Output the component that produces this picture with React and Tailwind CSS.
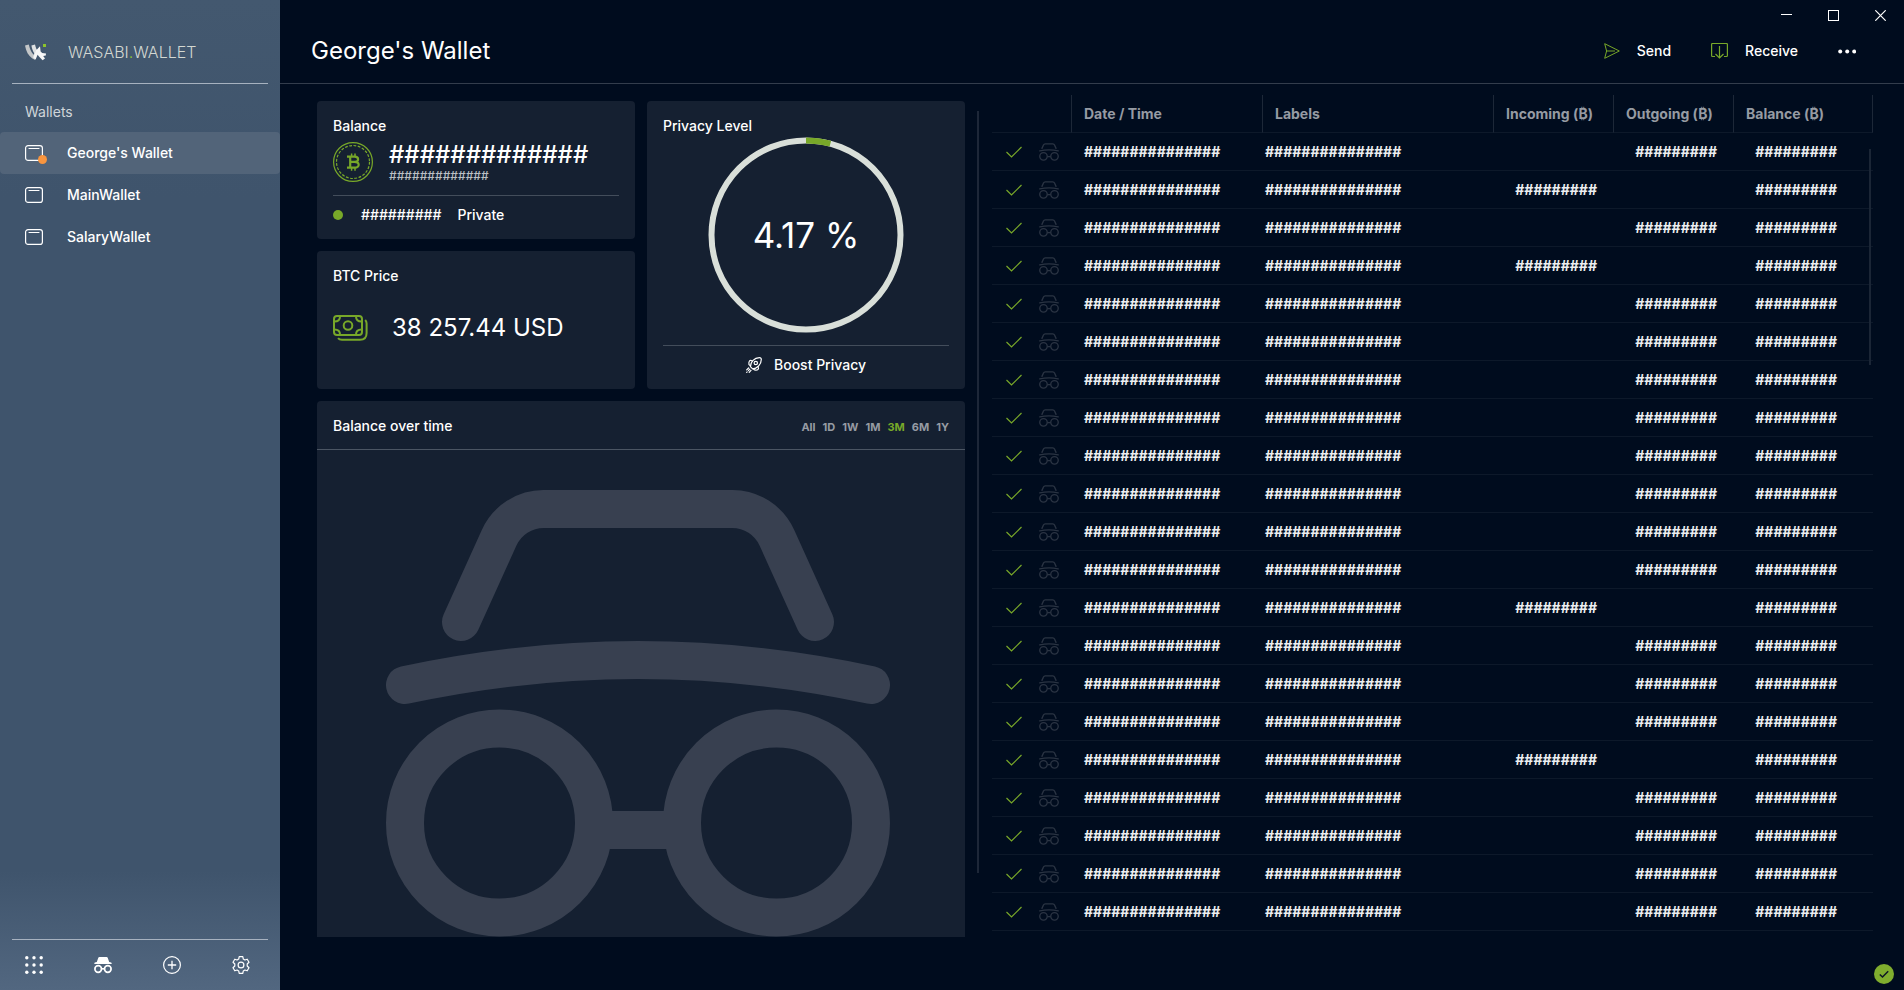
function GlassesHat({ className, strokeWidth = 38 }) {
  return (
    <svg
      viewBox="0 0 504 447"
      className={className}
      fill="none"
      stroke="currentColor"
      strokeWidth={strokeWidth}
      strokeLinecap="round"
      aria-hidden="true"
    >
      <path d="M75 132L113 48A49 49 0 0 1 158 19H346A49 49 0 0 1 391 48L429 132" />
      <path d="M19 195Q252 145 485 195" />
      <circle cx="113.500" cy="333" r="94.500" />
      <circle cx="390.500" cy="333" r="94.500" />
      <path d="M208 340H296" strokeLinecap="butt" />
    </svg>
  );
}

function Logo() {
  return (
    <svg viewBox="0 0 22 17" className="h-[17px] w-[22px]" aria-hidden="true">
      <path d="M0 1.600L3.800 0.400C4.800 4.600 6 7.600 8.200 10.200L10.600 12.600L10.200 16L7.400 14.600C3.400 11.800 1 7.400 0 1.600Z" fill="#c3c6c8" />
      <path d="M6.400 1.400L10 0.400C10.600 3.200 11.600 5.600 13.200 7.400L9.800 15.200L7.800 13.400L9.200 9.200C7.800 6.800 6.800 4.200 6.400 1.400Z" fill="#dfe1e2" />
      <path d="M11 6.600L15 2.200L15.600 7.400L17.200 9L21 9.400L20.800 11.600L18.200 12L20 14.600L17.600 16.200L14.200 12.800L12.600 10.800L10.600 15.600L8.600 13.400Z" fill="#f7f7f7" />
      <rect x="18" y="0" width="3" height="3" fill="#8cc42c" />
    </svg>
  );
}

function WalletIcon({ badge }) {
  return (
    <span className="relative h-[18px] w-[18px]">
      <svg viewBox="0 0 18 18" className="h-[18px] w-[18px]" fill="none" stroke="#fff" aria-hidden="true">
        <rect x="0.600" y="1.600" width="16.800" height="14.800" rx="2.500" strokeWidth="1.200" />
        <path d="M4 4.500H14" strokeWidth="1.100" strokeLinecap="round" />
      </svg>
      {badge && <span className="absolute -right-1 -bottom-0.5 h-[9px] w-[9px] rounded-full bg-[#f8953f]" />}
    </span>
  );
}

function Coin() {
  return (
    <svg viewBox="0 0 40 40" className="h-10 w-10" fill="none" stroke="#78a829" aria-hidden="true">
      <circle cx="20" cy="20" r="19.400" strokeWidth="1.200" />
      <circle cx="20" cy="20" r="16.500" strokeWidth="1.200" strokeDasharray="2.800 1.520" />
      <path
        d="M14 14.600H21.500C26.300 14.600 26.300 19.800 21.500 19.800H17M21.500 19.800C27 19.800 27 25.700 21.800 25.700H14M17.200 14.600V25.700"
        strokeWidth="2.200"
      />
      <path d="M18.600 11.500V14.500M22 11.500V14.500M18.600 25.500V28.800M22 25.500V28.800" strokeWidth="1.500" />
    </svg>
  );
}

function Banknotes() {
  return (
    <svg viewBox="0 0 35 26" className="h-[26px] w-[35px]" fill="none" stroke="#78a829" strokeWidth="2" aria-hidden="true">
      <rect x="1" y="1" width="28" height="19" rx="3" />
      <circle cx="15" cy="10.500" r="4.300" />
      <path d="M7 1.500C7 5 5 6.500 1.500 6.500M23 1.500C23 5 25 6.500 28.500 6.500M7 19.500C7 16 5 14.500 1.500 14.500M23 19.500C23 16 25 14.500 28.500 14.500" />
      <path d="M5 23.200C6 24.400 7 24.800 9 24.800H27C31.500 24.800 33.600 22.500 33.600 18V8.500C33.600 6.800 33 5.800 32.200 5" />
    </svg>
  );
}

function Rocket() {
  return (
    <svg viewBox="0 0 16 16" className="h-4 w-4" fill="none" stroke="#fff" strokeWidth="1.200" strokeLinecap="round" strokeLinejoin="round" aria-hidden="true">
      <path d="M4.400 9.600C4.600 5 8.200 0.700 13.400 0.700Q15.300 0.700 15.300 2.600C15.300 7.600 11 11.600 6.600 11.800Z" />
      <circle cx="9.800" cy="6" r="1.700" />
      <path d="M6.200 4C4 2.600 2.400 4 3 7.600L4.400 8.800M12 9.800C13.400 12 12 13.500 8.600 13L7.400 11.800" />
      <path d="M2.600 11L0.700 12.900M3.800 12.200L2.400 13.600M5 13.400L3.200 15.300M0.700 15.300L1.200 14.800" />
    </svg>
  );
}

const wallets = ["George's Wallet", "MainWallet", "SalaryWallet"];
const ranges = ["All", "1D", "1W", "1M", "3M", "6M", "1Y"];
const incomingRows = [1, 3, 12, 16];
const rows = Array.from({ length: 21 }, (_, i) => ({ id: i, incoming: incomingRows.includes(i) }));
const LONG = "###############";
const SHORT = "#########";

function Sidebar() {
  return (
    <aside className="flex w-70 shrink-0 flex-col bg-[linear-gradient(to_bottom,#43586f_0%,#3f546c_20%,#3f546c_88%,#526780_100%)]">
      <div className="mx-3 flex h-[84px] items-end border-b border-[#a7b2c0] px-[13px] pb-[19px]">
        <div className="flex items-center gap-[21px]">
          <Logo />
          <span className="text-base font-light text-[#d3d8d2]">
            WASABI<span className="text-[#8cc42c]">.</span>WALLET
          </span>
        </div>
      </div>
      <h2 className="px-[25px] pt-[18px] pb-2.5 text-sm leading-5 text-[#d0d5da]">Wallets</h2>
      <nav className="flex flex-col">
        {wallets.map((name, i) => (
          <a
            key={name}
            href="#"
            className={
              "flex h-[42px] items-center gap-6 rounded-sm px-[25px] text-sm font-medium text-white " +
              (i === 0 ? "bg-[#526479]" : "")
            }
          >
            <WalletIcon badge={i === 0} />
            {name}
          </a>
        ))}
      </nav>
      <div className="mx-3 mt-auto flex h-[51px] items-center gap-[51px] border-t border-[#a7b2c0] px-[13px]">
        <button aria-label="Menu">
          <svg viewBox="0 0 18 18" className="h-[18px] w-[18px]" fill="#fff" aria-hidden="true">
            {[1.8, 9, 16.2].map((y) => [1.8, 9, 16.2].map((x) => <circle key={x + "-" + y} cx={x} cy={y} r="1.700" />))}
          </svg>
        </button>
        <button aria-label="Discreet mode">
          <svg viewBox="0 0 18 18" className="h-[18px] w-[18px]" aria-hidden="true">
            <path d="M5.400 1H12.600Q13.500 1 13.800 1.900L15.200 6.100Q17.800 6.600 17.800 7.300Q17.800 7.900 17.200 7.900H0.800Q0.200 7.900 0.200 7.300Q0.200 6.600 2.800 6.100L4.200 1.900Q4.500 1 5.400 1Z" fill="#fff" />
            <circle cx="4.200" cy="13" r="3.300" fill="none" stroke="#fff" strokeWidth="1.700" />
            <circle cx="13.800" cy="13" r="3.300" fill="none" stroke="#fff" strokeWidth="1.700" />
            <path d="M7 12.800H11" stroke="#fff" strokeWidth="1.600" />
          </svg>
        </button>
        <button aria-label="Add wallet">
          <svg viewBox="0 0 18 18" className="h-[18px] w-[18px]" fill="none" stroke="#fff" aria-hidden="true">
            <circle cx="9" cy="9" r="8.400" strokeWidth="1.200" />
            <path d="M9 4.800V13.200M4.800 9H13.200" strokeWidth="1.300" />
          </svg>
        </button>
        <button aria-label="Settings">
          <svg viewBox="0 0 18 18" className="h-[18px] w-[18px]" fill="none" stroke="#fff" strokeWidth="1.200" strokeLinejoin="round" aria-hidden="true">
            <circle cx="9" cy="9" r="2.900" />
            <path d="M7.200 0.700H10.800L11.300 3.100L12.900 4L15.200 3.200L17 6.300L15.200 8V10L17 11.700L15.200 14.800L12.900 14L11.300 14.900L10.800 17.300H7.200L6.700 14.900L5.100 14L2.800 14.800L1 11.700L2.800 10V8L1 6.300L2.800 3.200L5.100 4L6.700 3.100Z" />
          </svg>
        </button>
      </div>
    </aside>
  );
}

function Header() {
  return (
    <header className="relative flex h-[84px] shrink-0 items-end justify-between border-b border-[#333d4c] pl-[31px]">
      <h1 className="pb-4 text-2xl leading-8">George's Wallet</h1>
      <div className="flex h-16 items-center pr-12 text-sm leading-[18px] font-medium">
        <button className="flex items-center gap-[17px]">
          <svg viewBox="0 0 16 16" className="h-4 w-4" fill="none" stroke="#78a829" strokeLinejoin="round" aria-hidden="true">
            <path d="M0.700 0.700L15.300 8L0.700 15.300L2.600 8ZM2.600 8H11" />
          </svg>
          Send
        </button>
        <button className="ml-10 flex items-center gap-[17px]">
          <svg viewBox="0 0 17 16" className="h-4 w-[17px]" fill="none" stroke="#78a829" aria-hidden="true">
            <path d="M4 13.500H1.500Q0.600 13.500 0.600 12.500V1.500Q0.600 0.500 1.500 0.500H15.500Q16.400 0.500 16.400 1.500V12.500Q16.400 13.500 15.500 13.500H13" strokeWidth="1.200" />
            <path d="M8.500 3V15M4.500 11L8.500 15L12.500 11" strokeWidth="1.200" />
          </svg>
          Receive
        </button>
        <button className="ml-10" aria-label="More">
          <svg viewBox="0 0 18 5" className="h-[5px] w-[18px]" fill="#fff" aria-hidden="true">
            <circle cx="2.200" cy="2.500" r="2" />
            <circle cx="9.200" cy="2.500" r="2" />
            <circle cx="16.200" cy="2.500" r="2" />
          </svg>
        </button>
      </div>
      <div className="absolute top-0 right-0 flex h-8">
        <button className="flex w-[47px] justify-center pt-2.5" aria-label="Minimize">
          <svg viewBox="0 0 11 11" className="h-[11px] w-[11px]" stroke="#fff" aria-hidden="true">
            <path d="M0 4.500H11" />
          </svg>
        </button>
        <button className="flex w-[47px] justify-center pt-2.5" aria-label="Maximize">
          <svg viewBox="0 0 11 11" className="h-[11px] w-[11px]" fill="none" stroke="#fff" aria-hidden="true">
            <rect x="0.500" y="0.500" width="10" height="10" />
          </svg>
        </button>
        <button className="flex w-[47px] justify-center pt-2.5" aria-label="Close">
          <svg viewBox="0 0 11 11" className="h-[11px] w-[11px]" fill="none" stroke="#fff" strokeWidth="1.200" aria-hidden="true">
            <path d="M0.300 0.300L10.700 10.700M10.700 0.300L0.300 10.700" />
          </svg>
        </button>
      </div>
    </header>
  );
}

function Dashboard() {
  return (
    <section className="grid w-[648px] shrink-0 grid-cols-2 grid-rows-[138px_138px_auto] gap-3 pt-[17px]">
      <div className="rounded-[4px] bg-[#152031] px-4 pt-4">
        <h2 className="text-sm leading-[18px] font-medium">Balance</h2>
        <div className="flex h-[61px] gap-4 border-b border-[#434d5b] pt-[7px]">
          <Coin />
          <div>
            <div className="text-2xl leading-[26px] font-medium">#############</div>
            <div className="text-xs leading-4 font-medium text-[#bcc0c5]">#############</div>
          </div>
        </div>
        <div className="flex items-center pt-2.5 text-sm leading-[18px] font-medium">
          <span className="mr-[18px] h-2.5 w-2.5 rounded-full bg-[#78a829]" />
          <span className="mr-4">{SHORT}</span>
          <span>Private</span>
        </div>
      </div>

      <div className="row-span-2 flex flex-col rounded-[4px] bg-[#152031] px-4 pt-4">
        <h2 className="text-sm leading-[18px] font-medium">Privacy Level</h2>
        <div className="mx-auto mt-0.5 grid h-[196px] w-[196px] place-items-center">
          <svg viewBox="0 0 196 196" className="col-start-1 row-start-1 h-[196px] w-[196px] -rotate-90" fill="none" strokeWidth="6" aria-hidden="true">
            <circle cx="98" cy="98" r="94.500" stroke="#d9dfd9" />
            <circle cx="98" cy="98" r="94.500" stroke="#78a829" pathLength="100" strokeDasharray="4.170 95.830" />
          </svg>
          <span className="col-start-1 row-start-1 text-[35px] leading-12">4.17 %</span>
        </div>
        <button className="mt-3 flex items-center justify-center gap-3 border-t border-[#434d5b] pt-2.5 text-sm leading-[18px] font-medium">
          <Rocket />
          Boost Privacy
        </button>
      </div>

      <div className="rounded-[4px] bg-[#152031] px-4 pt-4">
        <h2 className="text-sm leading-[18px] font-medium">BTC Price</h2>
        <div className="flex items-center gap-6 pt-[27px]">
          <Banknotes />
          <span className="text-2xl leading-8">38 257.44 USD</span>
        </div>
      </div>

      <div className="col-span-2 rounded-t-[4px] bg-[#152031]">
        <div className="flex h-[49px] items-center justify-between border-b border-[#4b5563] px-4 pt-0.5">
          <h2 className="text-sm font-medium">Balance over time</h2>
          <div className="flex gap-[7px] pt-0.5">
            {ranges.map((r) => (
              <button key={r} className={"text-[11px] font-bold " + (r === "3M" ? "text-[#78a829]" : "text-[#969ba3]")}>
                {r}
              </button>
            ))}
          </div>
        </div>
        <div className="flex justify-center pt-10 pr-1.5">
          <GlassesHat className="h-[447px] w-[504px] text-[#384050]" />
        </div>
      </div>
    </section>
  );
}

function History() {
  const head = "border-l border-[#1d2838] pl-3 text-left font-bold";
  return (
    <section className="relative ml-[13px] min-w-0 flex-1 pt-[11px]">
      <table className="w-full table-fixed border-separate border-spacing-0 text-sm leading-5 font-bold">
        <colgroup>
          <col className="w-[79px]" />
          <col className="w-[191px]" />
          <col />
          <col className="w-[120px]" />
          <col className="w-[120px]" />
          <col className="w-[140px]" />
        </colgroup>
        <thead>
          <tr className="h-[38px] text-[#969ba3] [&>th]:border-b [&>th]:border-b-[#0d192a]">
            <th aria-label="Status" />
            <th className={head}>Date / Time</th>
            <th className={head}>Labels</th>
            <th className={head}>Incoming (₿)</th>
            <th className={head}>Outgoing (₿)</th>
            <th className={head + " border-r"}>Balance (₿)</th>
          </tr>
        </thead>
        <tbody>
          {rows.map((row) => (
            <tr key={row.id} className="h-[38px] text-[#eceef0] [&>td]:border-b [&>td]:border-[#0d192a]">
              <td className="pl-3.5">
                <div className="flex items-center gap-[17px]">
                  <svg viewBox="0 0 16 12" className="h-3 w-4" fill="none" stroke="#78a829" strokeWidth="1.200" aria-hidden="true">
                    <path d="M0.500 6L5.500 11L15.500 1" />
                  </svg>
                  <GlassesHat className="h-[18px] w-5 text-[#2a3443]" strokeWidth={34} />
                </div>
              </td>
              <td className="pl-[13px]">{LONG}</td>
              <td className="pl-[3px]">{LONG}</td>
              <td className="pr-4 text-right">{row.incoming ? SHORT : ""}</td>
              <td className="pr-4 text-right">{row.incoming ? "" : SHORT}</td>
              <td className="pr-9 text-right">{SHORT}</td>
            </tr>
          ))}
        </tbody>
      </table>
      <div className="absolute top-[65px] right-0.5 h-[216px] w-0.5 bg-[#1b2636]" />
    </section>
  );
}

export default function App() {
  return (
    <div className="flex min-h-screen bg-[#000c1e] font-['Inter',sans-serif] text-white">
      <Sidebar />
      <main className="relative flex min-w-0 flex-1 flex-col">
        <Header />
        <div className="flex flex-1 items-start pr-[31px] pl-[37px]">
          <Dashboard />
          <div className="mt-[27px] ml-3 h-[762px] w-0.5 shrink-0 bg-[#1d2738]" />
          <History />
        </div>
        <svg viewBox="0 0 20 20" className="absolute right-2.5 bottom-1.5 h-5 w-5" role="img" aria-label="Synchronized">
          <circle cx="10" cy="10" r="10" fill="#7fad2e" />
          <path d="M5.800 10.500L8.500 13L14.200 7.300" fill="none" stroke="#0c1626" strokeWidth="1.500" />
        </svg>
      </main>
    </div>
  );
}
